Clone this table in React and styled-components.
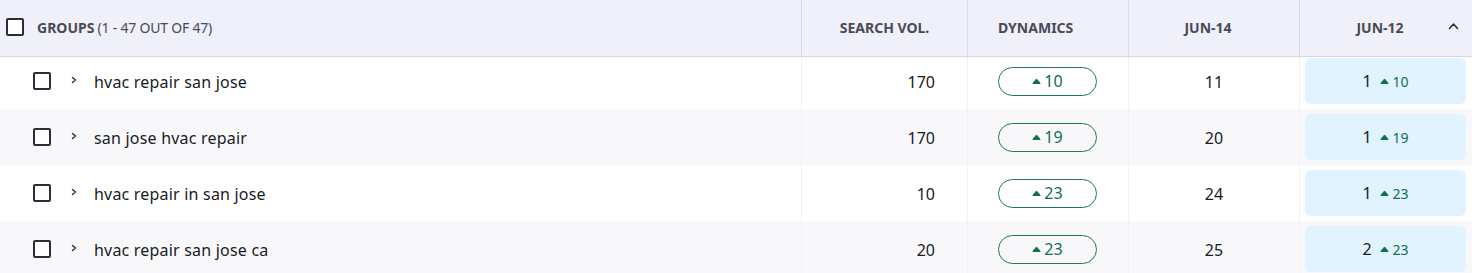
import React from "react";
import styled, { createGlobalStyle } from "styled-components";

const Global = createGlobalStyle`
  html, body { margin: 0; padding: 0; background: #ffffff; }
  body { font-family: "Noto Sans", "Open Sans", Arial, sans-serif; color: #191b23; }
  * { box-sizing: border-box; }
`;

const COLS = "802px 166px 161px 171px 172px";

const Table = styled.div`
  width: 1472px;
  height: 273px;
  overflow: hidden;
`;

const HeaderRow = styled.div`
  position: relative;
  z-index: 2;
  display: grid;
  grid-template-columns: ${COLS};
  height: 57px;
  background: #f0f0fa;
  border-bottom: 1px solid #d6d6e2;
`;

const HeadCell = styled.div`
  display: flex;
  align-items: center;
  justify-content: ${(p) => p.$justify || "center"};
  padding: ${(p) => p.$pad || "0"};
  border-right: ${(p) => (p.$last ? "none" : "1px solid #d9d9e5")};
  font-size: 14px;
  font-weight: 700;
  color: #484a54;
  position: relative;
`;

const HeadTitle = styled.span`
  margin-left: 13px;
`;

const HeadMuted = styled.span`
  font-weight: 400;
  margin-left: 3px;
  letter-spacing: -0.2px;
`;

const Body = styled.div`
  margin-top: -4px;
`;

const Row = styled.div`
  display: grid;
  grid-template-columns: ${COLS};
  height: 56px;
  background: ${(p) => (p.$alt ? "#f8f8fb" : "#ffffff")};
`;

const Cell = styled.div`
  display: flex;
  align-items: center;
  justify-content: ${(p) => p.$justify || "center"};
  padding: ${(p) => p.$pad || "0"};
  border-right: ${(p) => (p.$last ? "none" : "1px solid #f0f0f5")};
  font-size: 16px;
  color: #191b23;
`;

const Num = styled.span`
  position: relative;
  top: 1px;
`;

const Checkbox = styled.span`
  display: inline-block;
  width: 18px;
  height: 18px;
  border: 2px solid #2b2e38;
  border-radius: 2px;
  background: #ffffff;
  flex: none;
`;

const Chevron = styled.svg`
  width: 8px;
  height: 8px;
  margin-left: 19px;
  margin-right: 16px;
  flex: none;
  position: relative;
  top: -1px;
`;

const Keyword = styled.span`
  font-size: 16px;
  color: #191b23;
  letter-spacing: 0.2px;
  position: relative;
  top: 1px;
`;

const Pill = styled.span`
  display: inline-flex;
  align-items: center;
  justify-content: center;
  width: 99px;
  height: 29px;
  border: 1px solid #1b7a52;
  border-radius: 15px;
  color: #0f6e4c;
  font-size: 16px;
  gap: 3px;
`;

const Up = styled.svg`
  width: 9px;
  height: 6px;
  flex: none;
`;

const Highlight = styled.div`
  flex: 1;
  align-self: stretch;
  margin: 5px 6px 5px 5px;
  border-radius: 6px;
  background: #e1f3fe;
  display: flex;
  align-items: center;
  justify-content: center;
  gap: 8px;
  font-size: 16px;
`;

const Delta = styled.span`
  display: inline-flex;
  align-items: center;
  gap: 4px;
  color: #0f6e4c;
  font-size: 14px;
`;

const SortIcon = styled.svg`
  position: absolute;
  right: 13px;
  top: 22px;
  width: 11px;
  height: 8px;
`;

const UpArrow = () => (
  <Up viewBox="0 0 9 6">
    <path d="M0.8 5.4 L4.5 1 L8.2 5.4 Z" fill="#0f6e4c" stroke="#0f6e4c" strokeWidth="1" strokeLinejoin="round" />
  </Up>
);

const rows = [
  { kw: "hvac repair san jose", vol: 170, dyn: 10, j14: 11, j12: 1 },
  { kw: "san jose hvac repair", vol: 170, dyn: 19, j14: 20, j12: 1 },
  { kw: "hvac repair in san jose", vol: 10, dyn: 23, j14: 24, j12: 1 },
  { kw: "hvac repair san jose ca", vol: 20, dyn: 23, j14: 25, j12: 2 },
];

export default function App() {
  return (
    <>
      <Global />
      <Table>
        <HeaderRow>
          <HeadCell $justify="flex-start" $pad="0 0 2px 6px">
            <Checkbox />
            <HeadTitle>
              GROUPS<HeadMuted>(1 - 47 OUT OF 47)</HeadMuted>
            </HeadTitle>
          </HeadCell>
          <HeadCell $pad="0 0 2px 0">SEARCH VOL.</HeadCell>
          <HeadCell $justify="flex-start" $pad="0 0 2px 30px">DYNAMICS</HeadCell>
          <HeadCell $pad="0 12px 2px 0">JUN-14</HeadCell>
          <HeadCell $pad="0 12px 2px 0" $last>
            JUN-12
            <SortIcon viewBox="0 0 11 8">
              <path d="M1.5 6.5 L5.5 2 L9.5 6.5" fill="none" stroke="#2b2e38" strokeWidth="1.6" strokeLinecap="round" strokeLinejoin="round" />
            </SortIcon>
          </HeadCell>
        </HeaderRow>
        <Body>
          {rows.map((r, i) => (
            <Row key={r.kw} $alt={i % 2 === 1}>
              <Cell $justify="flex-start" $pad="0 0 0 33px">
                <Checkbox />
                <Chevron viewBox="0 0 8 8">
                  <path d="M2.5 1.5 L5.5 4 L2.5 6.5" fill="none" stroke="#2b2e38" strokeWidth="1.5" strokeLinecap="round" strokeLinejoin="round" />
                </Chevron>
                <Keyword>{r.kw}</Keyword>
              </Cell>
              <Cell $justify="flex-end" $pad="0 32px 0 0"><Num>{r.vol}</Num></Cell>
              <Cell $justify="flex-start" $pad="0 0 0 30px">
                <Pill>
                  <UpArrow />
                  {r.dyn}
                </Pill>
              </Cell>
              <Cell><Num>{r.j14}</Num></Cell>
              <Cell $pad="0" $last>
                <Highlight>
                  <span>{r.j12}</span>
                  <Delta>
                    <UpArrow />
                    {r.dyn}
                  </Delta>
                </Highlight>
              </Cell>
            </Row>
          ))}
        </Body>
      </Table>
    </>
  );
}
